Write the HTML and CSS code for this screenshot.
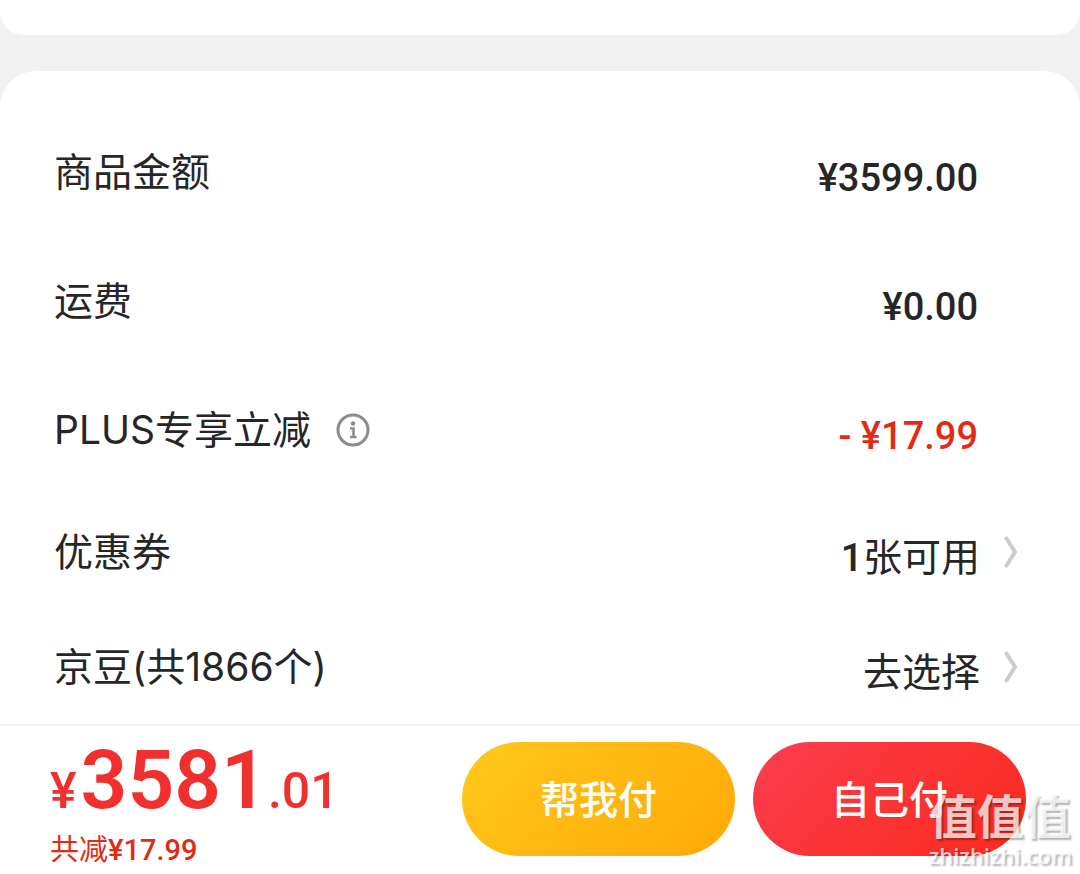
FILE: index.html
```html
<!DOCTYPE html>
<html lang="zh-CN">
<head>
  <meta charset="UTF-8">
  <meta name="viewport" content="width=device-width, initial-scale=1">
  <title>确认订单</title>
  <link rel="stylesheet" href="styles.css">
</head>
<body>

  <div class="card-prev"></div>

  <main class="card">
    <div class="row">
      <span class="label">商品金额</span>
      <span class="value">¥3599.00</span>
    </div>
    <div class="row">
      <span class="label">运费</span>
      <span class="value">¥0.00</span>
    </div>
    <div class="row">
      <span class="label">PLUS专享立减</span>
      <button class="info" aria-label="说明">
        <svg width="34" height="34" viewBox="0 0 34 34" fill="none" stroke="#8c8c8c">
          <circle cx="17" cy="17" r="15" stroke-width="3"/>
          <circle cx="17" cy="10.500" r="2.200" fill="#8c8c8c" stroke="none"/>
          <path d="M14 15.500H17.500V24M14 24H20.500" stroke-width="2.600"/>
        </svg>
      </button>
      <span class="value discount">- ¥17.99</span>
    </div>
    <div class="row row-small">
      <span class="label">优惠券</span>
      <button class="value choose"><span class="count">1</span>张可用</button>
      <svg class="arrow" width="14" height="32" viewBox="0 0 14 32" fill="none">
        <path d="M2.500 2.500L11 16L2.500 29.500" stroke="#ccc" stroke-width="4" stroke-linecap="round"/>
      </svg>
    </div>
    <div class="row row-small">
      <span class="label">京豆(共1866个)</span>
      <button class="value choose">去选择</button>
      <svg class="arrow" width="14" height="32" viewBox="0 0 14 32" fill="none">
        <path d="M2.500 2.500L11 16L2.500 29.500" stroke="#ccc" stroke-width="4" stroke-linecap="round"/>
      </svg>
    </div>
  </main>

  <footer class="pay-bar">
    <div class="total">
      <div class="price">¥<strong>3581</strong>.01</div>
      <div class="saved">共减<span class="saved-num">¥17.99</span></div>
    </div>
    <button class="pay pay-friend">帮我付</button>
    <button class="pay pay-self">自己付</button>
    <div class="watermark">
      <div class="mark-name">值值值</div>
      <div class="mark-url">zhizhizhi.com</div>
    </div>
  </footer>

</body>
</html>
```
FILE: styles.css
```css
* {
  box-sizing: border-box;
}
body {
  margin: 0;
  background-color: #f1f1f1;
  color: #262626;
  font-family: Inter, "Noto Sans CJK SC", sans-serif;
  font-size: 39px;
}
button {
  border: none;
  padding: 0;
  background: none;
  color: inherit;
  font: inherit;
  cursor: pointer;
}
svg {
  display: block;
}

.card-prev {
  height: 35px;
  margin-bottom: 36px;
  background-color: white;
  border-radius: 0 0 24px 24px;
}
.card {
  padding: 36px 62px 0 54px;
  background-color: white;
  border-radius: 36px 36px 0 0;
}
.row {
  display: flex;
  align-items: center;
  height: 129px;
}
.row-small {
  height: 115px;
}
.label {
  line-height: 56px;
}
.info {
  margin-left: 25px;
}
.value {
  margin-left: auto;
  margin-right: 40px;
  padding-top: 12px;
  font-family: Roboto, "Noto Sans CJK SC", sans-serif;
  font-size: 38px;
  font-weight: 500;
  line-height: 56px;
}
.discount {
  color: #e22b15;
}
.choose {
  margin-right: 24px;
  font-size: 39px;
  font-weight: 400;
}
.count {
  font-weight: 500;
}

.pay-bar {
  position: relative;
  display: flex;
  align-items: flex-start;
  gap: 18px;
  padding: 16px 54px 4px 50px;
  background-color: white;
  border-top: 2px solid #f4f4f4;
}
.total {
  flex: 1;
  color: #f0302f;
}
.price {
  font-family: Roboto, sans-serif;
  font-size: 50px;
  font-weight: 500;
  line-height: 40px;
}
.price strong {
  margin-left: 4px;
  font-size: 82px;
  font-weight: 600;
  line-height: 76px;
}
.saved {
  padding-top: 12px;
  color: #e22b15;
  font-size: 29px;
  line-height: 40px;
}
.saved-num {
  font-family: Roboto, sans-serif;
  font-weight: 500;
}
.pay {
  width: 273px;
  height: 114px;
  padding-bottom: 4px;
  border-radius: 57px;
  color: white;
  font-weight: 500;
}
.pay-friend {
  background: linear-gradient(135deg, #ffc81b, #ffa908);
}
.pay-self {
  background: linear-gradient(135deg, #fa3d4e, #fb2a1c);
}

/* site mark over the corner of the pay bar */
.watermark {
  position: absolute;
  right: 8px;
  bottom: 7px;
  color: rgba(255, 255, 255, 0.75);
  text-align: center;
  text-shadow: 2px 2px 2px rgba(0, 0, 0, 0.3);
  pointer-events: none;
}
.mark-name {
  font-size: 47px;
  font-weight: 700;
  line-height: 52px;
}
.mark-url {
  font-family: "Open Sans", sans-serif;
  font-size: 22px;
  font-weight: 600;
  line-height: 24px;
}
```
